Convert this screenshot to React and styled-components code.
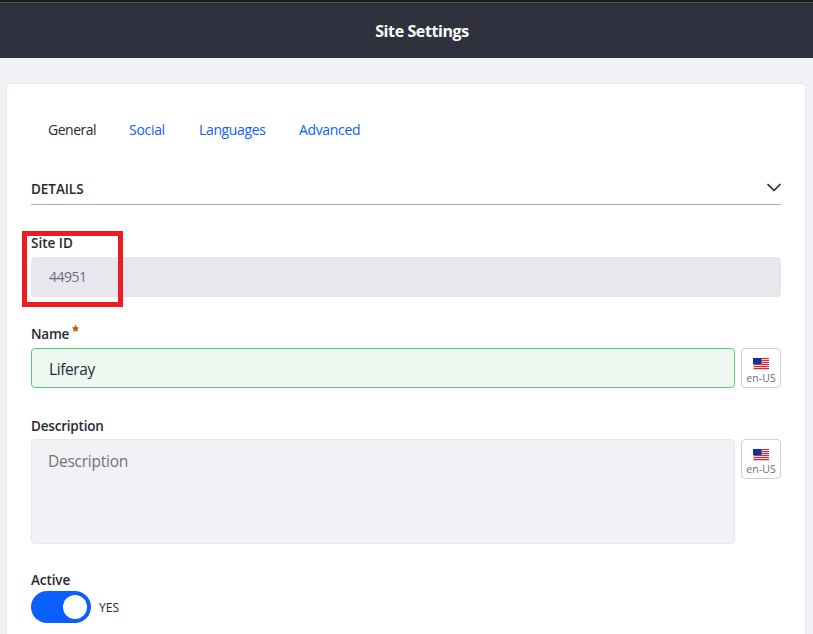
import React from "react";
import styled, { createGlobalStyle } from "styled-components";

const GlobalStyle = createGlobalStyle`
  *, *::before, *::after { box-sizing: border-box; }
  body {
    margin: 0;
    overflow: hidden;
    background: #f0f1f5;
    color: #272833;
    font-family: "Segoe UI", "Open Sans", "Noto Sans", sans-serif;
    font-size: 14px;
  }
`;

const Page = styled.div`
  height: 634px;
  overflow: hidden;
`;

const Header = styled.header`
  height: 58px;
  border-top: 2px solid #1a1a1a;
  background: #30313f;
  box-shadow: inset 0 1px #53534f;
  display: flex;
  justify-content: center;
  padding: 18px 0 0 31px;
`;

const Title = styled.h1`
  margin: 0;
  color: #fff;
  font-size: 16px;
  font-weight: 700;
  line-height: 22px;
  letter-spacing: -0.4px;
`;

const Sheet = styled.main`
  margin: 25px 7px 0 6px;
  height: 600px;
  padding: 30px 24px 0;
  background: #fff;
  border: 1px solid #e7e7ed;
  border-radius: 4px;
`;

const Tabs = styled.nav`
  display: flex;
  height: 32px;
  padding-left: 17px;
`;

const Tab = styled.a`
  flex: 0 0 ${(p) => p.$width}px;
  line-height: 32px;
  white-space: nowrap;
  letter-spacing: ${(p) => p.$tracking}px;
  color: ${(p) => (p.$active ? "#272833" : "#0b5fff")};
`;

const SectionHead = styled.div`
  display: flex;
  justify-content: space-between;
  height: 30px;
  margin-top: 29px;
  border-bottom: 1px solid #a7a9bc;
`;

const SectionTitle = styled.h2`
  margin: 0;
  font-size: 13.5px;
  font-weight: 600;
  line-height: 28px;
  letter-spacing: -0.05px;
`;

const Chevron = styled.svg`
  width: 16px;
  height: 10px;
  margin: 8px -1px 0 0;
`;

const Field = styled.section`
  position: relative;
  margin-top: ${(p) => p.$gap}px;
`;

const Label = styled.label`
  display: flex;
  height: 20px;
  font-size: 13.5px;
  font-weight: 600;
  line-height: 20px;
  letter-spacing: ${(p) => p.$tracking || 0}px;
`;

const Required = styled.svg`
  width: 7px;
  height: 7px;
  margin: 1px 0 0 3px;
`;

const InputRow = styled.div`
  display: flex;
  align-items: flex-start;
  gap: 6px;
  margin-top: ${(p) => p.$gap}px;
`;

const SiteId = styled.div`
  flex: 1;
  height: 40px;
  padding-left: 18px;
  border-radius: 4px;
  background: #e7e7ed;
  color: #6b6c7e;
  line-height: 40px;
  letter-spacing: -0.5px;
`;

const NameBox = styled.div`
  flex: 1;
  height: 40px;
  padding-left: 17px;
  border: 1px solid #5aca75;
  border-radius: 4px;
  background: #edf8f0;
  font-size: 15.5px;
  line-height: 41px;
  letter-spacing: -0.4px;
`;

const DescriptionBox = styled.div`
  flex: 1;
  height: 105px;
  padding: 9px 16px;
  border: 1px solid #e7e7ed;
  border-radius: 4px;
  background: #f1f2f5;
  color: #737373;
  font-size: 15.5px;
  line-height: 24px;
  letter-spacing: -0.25px;
`;

const LocaleButton = styled.button`
  display: flex;
  flex-direction: column;
  align-items: center;
  width: 40px;
  height: 40px;
  padding: 9px 0 0;
  border: 1px solid #cdced9;
  border-radius: 4px;
  background: #fff;
  color: #6b6c7e;
  font: 10.5px/14px "Segoe UI", "Open Sans", "Noto Sans", sans-serif;
`;

const Flag = styled.svg`
  display: block;
  flex: none;
  width: 16px;
  height: 12px;
`;

const LocaleName = styled.span`
  margin-top: 1px;
  white-space: nowrap;
  letter-spacing: 0.1px;
`;

const Highlight = styled.div`
  position: absolute;
  left: -9px;
  top: -2px;
  width: 101px;
  height: 76px;
  border: 5px solid #ed1c24;
`;

const ToggleRow = styled.div`
  display: flex;
  align-items: center;
  gap: 8px;
  margin-top: 1px;
`;

const Switch = styled.span`
  display: flex;
  justify-content: flex-end;
  width: 60px;
  height: 32px;
  padding: 4px;
  border-radius: 16px;
  background: #0b5fff;
`;

const Knob = styled.span`
  width: 24px;
  height: 24px;
  border-radius: 50%;
  background: #fff;
`;

const ToggleText = styled.span`
  font-size: 12px;
  letter-spacing: 0;
`;

function Locale() {
  return (
    <LocaleButton type="button">
      <Flag viewBox="0 0 16 12">
        <rect width="16" height="12" fill="#fff" />
        {[0, 2, 4, 6, 8, 10].map((y) => (
          <rect key={y} y={y} width="16" height="1.15" fill="#e8232d" />
        ))}
        <rect y="6" width="1" height="6" fill="#c9c9cf" />
        <rect y="11.3" width="16" height="0.7" fill="#c9c9cf" />
        <rect width="8.5" height="6" fill="#0635a0" />
      </Flag>
      <LocaleName>en-US</LocaleName>
    </LocaleButton>
  );
}

export default function App() {
  return (
    <Page>
      <GlobalStyle />
      <Header>
        <Title>Site Settings</Title>
      </Header>
      <Sheet>
        <Tabs>
          <Tab $width={81} $tracking={-0.5} $active>General</Tab>
          <Tab $width={70} $tracking={-0.3}>Social</Tab>
          <Tab $width={100} $tracking={-0.35}>Languages</Tab>
          <Tab $width={80} $tracking={-0.35}>Advanced</Tab>
        </Tabs>
        <SectionHead>
          <SectionTitle>DETAILS</SectionTitle>
          <Chevron viewBox="0 0 16 10" fill="none" stroke="#272833" strokeWidth="1.7" strokeLinecap="round" strokeLinejoin="round">
            <path d="M2 1.5 L8 7.5 L14 1.5" />
          </Chevron>
        </SectionHead>
        <Field $gap={28}>
          <Label>Site ID</Label>
          <InputRow $gap={4}>
            <SiteId>44951</SiteId>
          </InputRow>
          <Highlight />
        </Field>
        <Field $gap={27}>
          <Label $tracking={-0.25}>
            Name
            <Required viewBox="0 0 7 7" stroke="#b95000" strokeWidth="1.6">
              <path d="M3.5 0.3V3.5M0.5 2.7L3.5 3.5L6.5 2.7M1.6 6.3L3.5 3.5L5.4 6.3" fill="none" />
            </Required>
          </Label>
          <InputRow $gap={4}>
            <NameBox>Liferay</NameBox>
            <Locale />
          </InputRow>
        </Field>
        <Field $gap={28}>
          <Label $tracking={-0.2}>Description</Label>
          <InputRow $gap={3}>
            <DescriptionBox>Description</DescriptionBox>
            <Locale />
          </InputRow>
        </Field>
        <Field $gap={26}>
          <Label $tracking={-0.1}>Active</Label>
          <ToggleRow>
            <Switch role="switch" aria-checked="true">
              <Knob />
            </Switch>
            <ToggleText>YES</ToggleText>
          </ToggleRow>
        </Field>
      </Sheet>
    </Page>
  );
}
